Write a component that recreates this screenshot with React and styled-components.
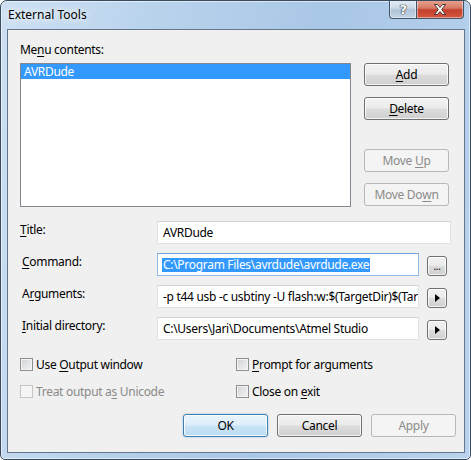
import styled, { createGlobalStyle, css } from "styled-components";

const GlobalStyle = createGlobalStyle`
  html, body {
    margin: 0;
    padding: 0;
    background: #ffffff;
  }
  body {
    font-family: "Segoe UI", "Noto Sans", sans-serif;
    font-size: 12px;
    letter-spacing: -0.3px;
    color: #000;
  }
`;

const Window = styled.div`
  width: 471px;
  height: 460px;
  box-sizing: border-box;
  border: 1px solid #3a4b5e;
  border-radius: 7px 7px 5px 5px;
  background: linear-gradient(100deg, #cde0f3 0%, #b8d2ec 30%, #a9c7e6 60%, #b9d3ee 100%);
  box-shadow: inset 0 0 0 1px rgba(255, 255, 255, 0.55);
  display: flex;
  flex-direction: column;
  overflow: hidden;
`;

const TitleBar = styled.div`
  height: 28px;
  display: flex;
  align-items: flex-start;
  padding-left: 7px;
  flex-shrink: 0;
`;

const Caption = styled.div`
  flex: 1;
  line-height: 28px;
  letter-spacing: 0;
  text-shadow: 0 0 6px #fff, 0 0 10px #fff;
`;

const CaptionButton = styled.div`
  height: 19px;
  margin-top: -1px;
  box-sizing: border-box;
  border: 1px solid #43536a;
  border-top: none;
  display: flex;
  align-items: center;
  justify-content: center;
  box-shadow: inset 0 0 0 1px rgba(255, 255, 255, 0.45);
  ${(p) =>
    p.$close
      ? css`
          width: 47px;
          margin-right: 6px;
          border-left: none;
          border-radius: 0 0 4px 0;
          background: linear-gradient(#e7a593 0%, #d77a66 45%, #c4402c 55%, #d6573f 100%);
        `
      : css`
          width: 28px;
          border-radius: 0 0 0 4px;
          background: linear-gradient(#e4edf6 0%, #cbd9e8 45%, #afc2d6 55%, #c3d4e6 100%);
        `}
`;

const HelpGlyph = styled.span`
  font-family: "DejaVu Sans", sans-serif;
  font-weight: bold;
  font-size: 13px;
  color: #fff;
  line-height: 1;
  text-shadow: 0 0 1px #333, 0 0 1px #333, 0 0 1px #333;
`;

const Client = styled.div`
  flex: 1;
  margin: 0 5px 6px 6px;
  border: 1px solid #65768a;
  background: #f0f0f0;
  padding: 12px 8px 14px 12px;
  display: flex;
  flex-direction: column;
`;

const TopGrid = styled.div`
  display: grid;
  grid-template-columns: 331px 85px;
  column-gap: 13px;
`;

const Label = styled.div`
  line-height: 15px;
  white-space: nowrap;
  color: ${(p) => (p.$disabled ? "#8a8a8a" : "#000")};
`;

const MenuLabel = styled(Label)`
  grid-column: 1 / 3;
  margin-bottom: 6px;
`;

const ListBox = styled.div`
  height: 144px;
  box-sizing: border-box;
  border: 1px solid #828790;
  background: #fff;
`;

const ListItem = styled.div`
  height: 15px;
  line-height: 15px;
  padding-left: 3px;
  background: ${(p) => (p.$selected ? "#3399ff" : "transparent")};
  color: ${(p) => (p.$selected ? "#fff" : "#000")};
`;

const ButtonColumn = styled.div`
  display: flex;
  flex-direction: column;
`;

const Button = styled.div`
  width: 85px;
  height: 23px;
  box-sizing: border-box;
  border: 1px solid #707070;
  border-radius: 3px;
  display: flex;
  align-items: center;
  justify-content: center;
  background: linear-gradient(#f2f2f2 0%, #ebebeb 48%, #dddddd 52%, #cfcfcf 100%);
  box-shadow: inset 0 0 0 1px rgba(255, 255, 255, 0.75);
  margin-top: ${(p) => p.$gap || 0}px;
  ${(p) =>
    p.$disabled &&
    css`
      border-color: #b5b9bc;
      background: #f4f4f4;
      color: #8b8b8b;
      box-shadow: none;
    `}
  ${(p) =>
    p.$default &&
    css`
      border-color: #3c7fb1;
      background: linear-gradient(#eaf5fc 0%, #dcedf9 48%, #c9e4f6 52%, #bcdcf2 100%);
      box-shadow: inset 0 0 0 1px rgba(255, 255, 255, 0.8), 0 0 2px rgba(60, 127, 177, 0.5);
    `}
`;

const Key = styled.span`
  text-decoration: underline;
  text-underline-offset: 2px;
`;

const Form = styled.div`
  margin-top: 14px;
  display: grid;
  grid-template-columns: 137px 262px 32px;
  grid-auto-rows: 23px;
  row-gap: 9px;
`;

const FieldLabel = styled(Label)`
  align-self: start;
  padding-top: 1px;
  padding-left: ${(p) => p.$indent || 0}px;
`;

const TextBox = styled.div`
  grid-column: ${(p) => (p.$wide ? "2 / 4" : "2")};
  width: ${(p) => (p.$wide ? "294px" : "auto")};
  box-sizing: border-box;
  height: 23px;
  border: 1px solid ${(p) => (p.$focused ? "#8fbbe4" : "#dde2e8")};
  border-top-color: ${(p) => (p.$focused ? "#6fa5d8" : "#cfd4da")};
  background: #fff;
  padding-left: 5px;
  display: flex;
  align-items: center;
  white-space: nowrap;
  overflow: hidden;
`;

const Selected = styled.span`
  background: #3399ff;
  color: #fff;
  line-height: 14px;
  margin-left: -1px;
  padding: 0 1px;
`;

const SmallButton = styled.div`
  width: 20px;
  height: 20px;
  align-self: end;
  margin-left: 8px;
  box-sizing: border-box;
  border: 1px solid #707070;
  border-radius: 3px;
  display: flex;
  align-items: center;
  justify-content: center;
  background: linear-gradient(#f2f2f2 0%, #ebebeb 48%, #dddddd 52%, #cfcfcf 100%);
  box-shadow: inset 0 0 0 1px rgba(255, 255, 255, 0.75);
  font-size: 10px;
  line-height: 1;
`;

const Options = styled.div`
  margin-top: 17px;
  display: grid;
  grid-template-columns: 216px 216px;
  grid-auto-rows: 15px;
  row-gap: 12px;
`;

const Option = styled.div`
  display: flex;
  align-items: center;
  gap: 3px;
  line-height: 15px;
  color: ${(p) => (p.$disabled ? "#8a8a8a" : "#000")};
`;

const Box = styled.span`
  width: 13px;
  height: 13px;
  box-sizing: border-box;
  border: 1px solid ${(p) => (p.$disabled ? "#c4c4c4" : "#8e8f8f")};
  background: ${(p) =>
    p.$disabled
      ? "#f4f4f4"
      : "linear-gradient(135deg, #cfd2d6 0%, #e6e7e9 60%, #f3f3f3 100%)"};
  box-shadow: inset 0 0 0 1px ${(p) => (p.$disabled ? "#f7f7f7" : "#f4f4f4")};
  flex-shrink: 0;
`;

const Actions = styled.div`
  margin-top: 15px;
  display: flex;
  justify-content: flex-end;
  gap: 9px;
`;

const Arrow = () => (
  <svg width="5" height="8" viewBox="0 0 5 8">
    <path d="M0 0 L5 4 L0 8 Z" fill="#000" />
  </svg>
);

const CloseIcon = () => (
  <svg width="14" height="11" viewBox="0 0 14 11">
    <path
      d="M1.5 0.5 H4.5 L7 3.5 L9.5 0.5 H12.5 L8.7 5.5 L12.5 10.5 H9.5 L7 7.5 L4.5 10.5 H1.5 L5.3 5.5 Z"
      fill="#fff"
      stroke="#4a3230"
      strokeWidth="1"
      strokeLinejoin="round"
    />
  </svg>
);

export default function App() {
  return (
    <>
      <GlobalStyle />
      <Window>
        <TitleBar>
          <Caption>External Tools</Caption>
          <CaptionButton>
            <HelpGlyph>?</HelpGlyph>
          </CaptionButton>
          <CaptionButton $close>
            <CloseIcon />
          </CaptionButton>
        </TitleBar>
        <Client>
          <TopGrid>
            <MenuLabel>
              Me<Key>n</Key>u contents:
            </MenuLabel>
            <ListBox>
              <ListItem $selected>AVRDude</ListItem>
            </ListBox>
            <ButtonColumn>
              <Button>
                <Key>A</Key>dd
              </Button>
              <Button $gap={11}>
                <Key>D</Key>elete
              </Button>
              <Button $gap={29} $disabled>
                Move&nbsp;<Key>U</Key>p
              </Button>
              <Button $gap={11} $disabled>
                Move Do<Key>w</Key>n
              </Button>
            </ButtonColumn>
          </TopGrid>

          <Form>
            <FieldLabel>
              <Key>T</Key>itle:
            </FieldLabel>
            <TextBox $wide>AVRDude</TextBox>

            <FieldLabel $indent={2}>
              <Key>C</Key>ommand:
            </FieldLabel>
            <TextBox $focused>
              <Selected>C:\Program Files\avrdude\avrdude.exe</Selected>
            </TextBox>
            <SmallButton>...</SmallButton>

            <FieldLabel $indent={2}>
              A<Key>r</Key>guments:
            </FieldLabel>
            <TextBox>-p t44 usb -c usbtiny -U flash:w:$(TargetDir)$(TargetName).hex:i</TextBox>
            <SmallButton>
              <Arrow />
            </SmallButton>

            <FieldLabel $indent={2}>
              <Key>I</Key>nitial directory:
            </FieldLabel>
            <TextBox>C:\Users\Jari\Documents\Atmel Studio</TextBox>
            <SmallButton>
              <Arrow />
            </SmallButton>
          </Form>

          <Options>
            <Option>
              <Box />
              <span>
                Use <Key>O</Key>utput window
              </span>
            </Option>
            <Option>
              <Box />
              <span>
                <Key>P</Key>rompt for arguments
              </span>
            </Option>
            <Option $disabled>
              <Box $disabled />
              <span>
                Treat output a<Key>s</Key> Unicode
              </span>
            </Option>
            <Option>
              <Box />
              <span>
                Close on <Key>e</Key>xit
              </span>
            </Option>
          </Options>

          <Actions>
            <Button $default>OK</Button>
            <Button>Cancel</Button>
            <Button $disabled>Apply</Button>
          </Actions>
        </Client>
      </Window>
    </>
  );
}
